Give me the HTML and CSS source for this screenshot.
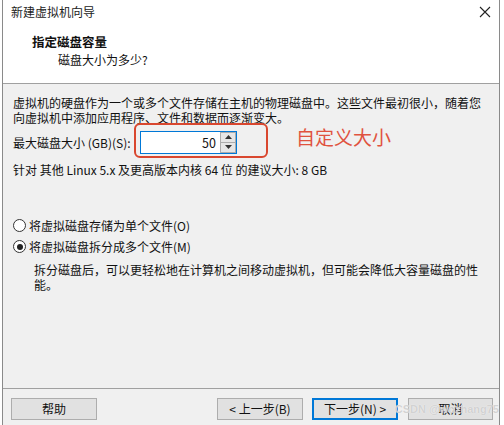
FILE: index.html
```html
<!DOCTYPE html>
<html lang="zh">
<head>
<meta charset="utf-8">
<link rel="stylesheet" href="styles.css">
</head>
<body>
<div class="window">
  <div class="titlebar">
    <span class="title">新建虚拟机向导</span>
    <svg class="close" width="12" height="12" viewBox="0 0 12 12"><path d="M1 1L11 11M11 1L1 11" stroke="#222" stroke-width="1.1"/></svg>
  </div>
  <div class="header">
    <div class="h-title">指定磁盘容量</div>
    <div class="h-sub">磁盘大小为多少?</div>
  </div>
  <div class="body">
    <p class="para">虚拟机的硬盘作为一个或多个文件存储在主机的物理磁盘中。这些文件最初很小，随着您<br>向虚拟机中添加应用程序、文件和数据而逐渐变大。</p>
    <div class="size-row">
      <span class="label">最大磁盘大小 (GB)(S):</span>
      <div class="spin">
        <span class="spin-value">50</span>
        <div class="spin-btns">
          <div class="spin-btn"><svg width="7" height="4" viewBox="0 0 7 4"><path d="M0 4L3.5 0L7 4Z" fill="#333"/></svg></div>
          <div class="spin-btn"><svg width="7" height="4" viewBox="0 0 7 4"><path d="M0 0L3.5 4L7 0Z" fill="#333"/></svg></div>
        </div>
      </div>
      <div class="mark-box"></div>
      <span class="mark-text">自定义大小</span>
    </div>
    <p class="hint">针对 其他 Linux 5.x 及更高版本内核 64 位 的建议大小: 8 GB</p>
    <div class="radios">
      <div class="radio-row"><span class="radio"></span><span>将虚拟磁盘存储为单个文件(O)</span></div>
      <div class="radio-row"><span class="radio checked"></span><span>将虚拟磁盘拆分成多个文件(M)</span></div>
      <p class="desc">拆分磁盘后，可以更轻松地在计算机之间移动虚拟机，但可能会降低大容量磁盘的性<br>能。</p>
    </div>
  </div>
  <div class="footer">
    <button class="btn">帮助</button>
    <div class="spacer"></div>
    <button class="btn">&lt; 上一步(B)</button>
    <button class="btn default">下一步(N) &gt;</button>
    <button class="btn cancel">取消</button>
    <span class="watermark">CSDN @wozhang75</span>
  </div>
</div>
</body>
</html>
```

FILE: styles.css
```css
* { box-sizing: border-box; }
html, body { margin: 0; padding: 0; }
body {
  width: 504px;
  height: 425px;
  background: #ffffff;
  font-family: "Noto Sans CJK SC", "Noto Sans", sans-serif;
  font-size: 12px;
  color: #111;
  overflow: hidden;
}
.window {
  margin-left: 2px;
  width: 498px;
  height: 425px;
  border-left: 1px solid #8a8a8a;
  border-right: 1px solid #8a8a8a;
  display: flex;
  flex-direction: column;
  background: #f0f0f0;
}
.titlebar {
  height: 24px;
  background: #fff;
  display: flex;
  align-items: center;
  padding-left: 8px;
  padding-right: 8px;
  justify-content: space-between;
  color: #222;
}
.title { line-height: 24px; }
.close { margin-top: 0; }
.header {
  background: #fff;
  padding: 9px 0 14px 29px;
  border-bottom: 1px solid #a0a0a0;
  height: 60px;
}
.h-title { font-weight: 700; line-height: 18px; font-size: 12.5px; }
.h-sub { line-height: 18px; padding-left: 26px; }
.body {
  padding: 11px 0 0 10px;
  height: 304px;
}
.para, .hint, .desc { margin: 0; line-height: 15px; }
.size-row {
  position: relative;
  display: flex;
  align-items: center;
  margin-top: 6px;
  height: 22px;
}
.label { width: 127px; white-space: nowrap; }
.spin {
  width: 97px;
  height: 23px;
  border: 1px solid #0078d7;
  background: #fff;
  display: flex;
}
.spin-value {
  flex: 1;
  text-align: right;
  padding-right: 4px;
  line-height: 21px;
  font-size: 12.5px;
}
.spin-btns {
  width: 16px;
  display: flex;
  flex-direction: column;
}
.spin-btn {
  flex: 1;
  background: #e6e6e6;
  border: 1px solid #acacac;
  display: flex;
  align-items: center;
  justify-content: center;
}
.spin-btn + .spin-btn { border-top: none; }
.mark-box {
  position: absolute;
  left: 121px;
  top: -8px;
  width: 134px;
  height: 35px;
  border: 2.5px solid #d9472f;
  border-radius: 6px;
}
.mark-text {
  position: absolute;
  left: 283px;
  top: -7px;
  font-size: 19px;
  color: #e0533f;
  line-height: 26px;
}
.hint { margin-top: 9px; }
.radios { margin-top: 38px; }
.radio-row {
  display: flex;
  align-items: center;
  height: 21px;
  gap: 3px;
}
.radio {
  width: 13px;
  height: 13px;
  border: 1px solid #333;
  border-radius: 50%;
  background: #fff;
  position: relative;
}
.radio.checked::after {
  content: "";
  position: absolute;
  left: 2.5px;
  top: 2.5px;
  width: 6px;
  height: 6px;
  border-radius: 50%;
  background: #222;
}
.desc { margin-top: 5px; padding-left: 21px; }
.footer {
  position: relative;
  border-top: 1px solid #a0a0a0;
  padding: 9px 6px 0 8px;
  display: flex;
  align-items: flex-start;
  flex: 1;
}
.spacer { flex: 1; }
.btn {
  width: 86px;
  height: 22px;
  background: #e1e1e1;
  border: 1px solid #adadad;
  font-family: inherit;
  font-size: 12px;
  color: #111;
  padding: 0;
  margin: 0;
  line-height: 20px;
}
.btn + .btn { margin-left: 9px; }
.btn.default { border: 2px solid #0078d7; line-height: 18px; }
.btn.cancel { margin-left: 10px; width: 85px; }
.watermark {
  position: absolute;
  right: 0px;
  top: 14px;
  font-size: 11px;
  color: rgba(200, 200, 200, 0.8);
  text-shadow: 0 0 1px rgba(255,255,255,0.9);
  font-family: "Liberation Sans", sans-serif;
  font-weight: 700;
}
```
